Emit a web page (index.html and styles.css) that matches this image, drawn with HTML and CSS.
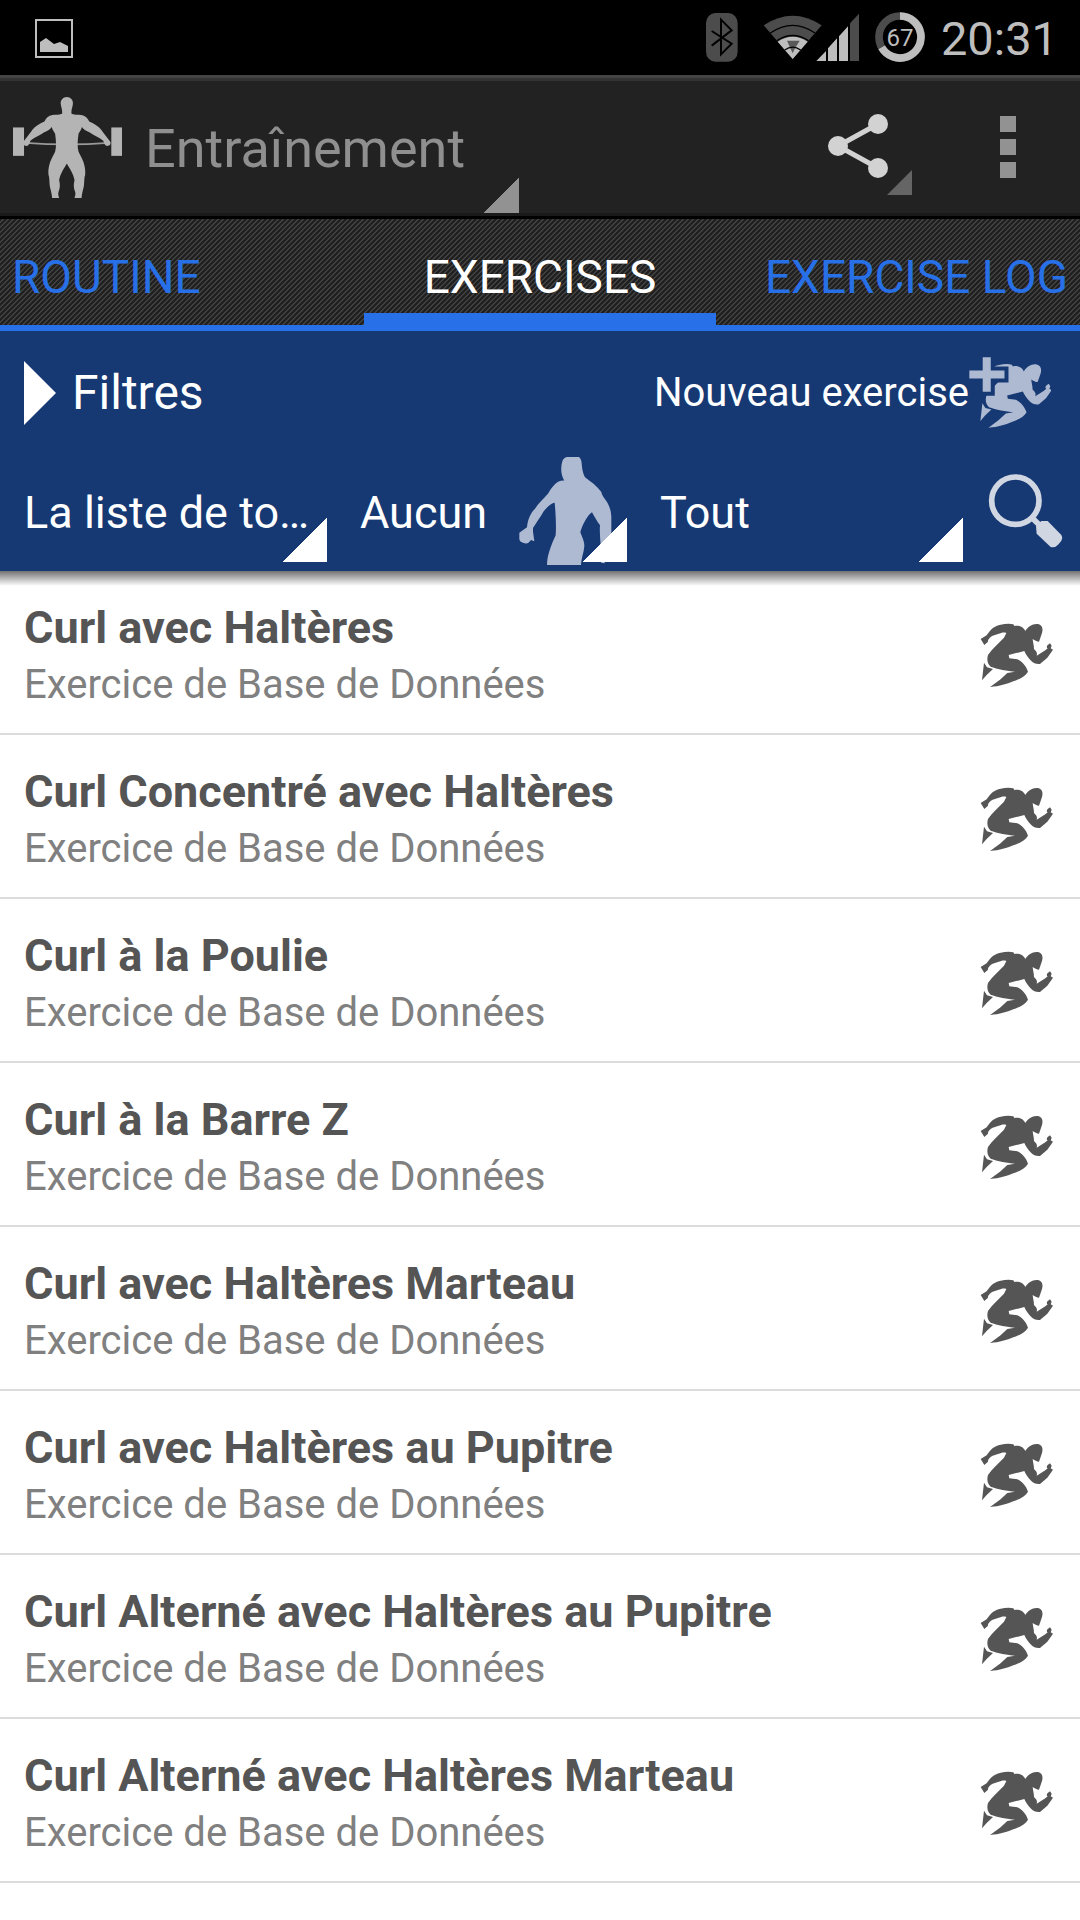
FILE: index.html
```html
<!DOCTYPE html>
<html lang="fr">
<head>
<meta charset="utf-8">
<meta name="viewport" content="width=device-width">
<title>Entraînement</title>
<link rel="stylesheet" href="styles.css">
</head>
<body>
<svg class="defs" aria-hidden="true">
  <symbol id="runner" viewBox="60 68 222 195">
    <g id="runner-shape">
      <path d="M62 116L80 105C92 86 104 76 122 73C135 70 150 69 160 72L163 77C175 74 190 78 196 92C204 78 218 69 234 71C246 74 250 84 246 98L237 124C231 124 224 120 218 116C219 128 222 134 222 146C228 152 233 156 230 166L256 150L263 144C257 140 262 134 270 129L275 136L272 144L279 148L262 172L240 191C228 192 220 188 214 182C204 172 196 160 193 152L146 164L148 174L172 177C184 182 198 196 204 214C196 228 180 236 160 243C140 251 120 258 90 260L120 238L142 218L165 214C145 212 110 206 92 199C82 190 80 176 84 164C96 146 112 132 132 112L139 98C130 95 124 98 114 101L98 106C90 110 82 118 84 124L73 134Z"/>
      <path d="M72 187L81 201L99 206L80 224L66 240Z"/>
    </g>
  </symbol>
</svg>

<div class="statusbar">
  <svg class="picture" width="38" height="39" viewBox="0 0 38 39" role="img" aria-label="Image">
    <rect x="1" y="1" width="36" height="37" fill="none" stroke="#bebebe" stroke-width="2"/>
    <path d="M5 33V23L11 19L19 25L25 23L33 27V33Z" fill="#bebebe"/>
  </svg>
  <svg width="41" height="55" viewBox="45 30 123 165" role="img" aria-label="Bluetooth">
    <rect x="45" y="36" width="95" height="146" rx="28" ry="30" fill="#4c4c4c"/>
    <path d="M62 90L122 128L90 160V56L122 88L62 134" fill="none" stroke="#000" stroke-width="6"/>
  </svg>
  <svg width="96" height="55" viewBox="216 30 288 165" role="img" aria-label="Wi-Fi, mobile">
    <path d="M218 73Q305 16 392 73L305 174Z" fill="#4c4c4c"/>
    <path d="M260 122Q305 92 350 122L305 174Z" fill="#bebebe"/>
    <path d="M288 119H326L312 142L305 157L298 142Z" fill="#5a5a5a"/>
    <path d="M238 96Q305 50 372 96M258 119Q305 88 352 119M281 147Q305 130 329 147" fill="none" stroke="#000" stroke-width="4"/>
    <path d="M376 180L405 150V180ZM411 180V142L438 112V180ZM444 180V106L471 76V180Z" fill="#bebebe"/>
    <path d="M477 180V67L504 38V180Z" fill="#4c4c4c"/>
  </svg>
  <svg width="50" height="55" viewBox="552 30 150 165" role="img" aria-label="67 %">
    <circle cx="627" cy="108" r="63" fill="none" stroke="#4c4c4c" stroke-width="23"/>
    <path d="M627 45A63 63 0 1 1 572 139" fill="none" stroke="#bebebe" stroke-width="23"/>
    <text class="charge" x="627" y="134" text-anchor="middle">67</text>
  </svg>
  <time class="clock">20:31</time>
</div>

<header class="actionbar">
  <svg class="logo" width="109" height="101" viewBox="40 48 326 302" role="img" aria-label="Logo">
    <path d="M78 185Q203 194 326 185" fill="none" stroke="#999" stroke-width="5"/>
    <g fill="#b4b4b4">
      <path id="half" d="M200 48C213 48 221 58 219 70C218 80 214 84 215 98C226 103 234 100 244 102C256 104 264 112 268 121C285 129 301 138 308 152L331 182C334 190 328 196 318 194C314 190 312 186 310 179C300 169 280 162 270 154C258 150 250 144 246 138C244 148 238 153 236 158C233 180 232 196 236 212C246 232 258 250 256 280C252 292 254 300 252 314C250 325 246 335 245 350H224C225 345 228 340 226 332C222 322 220 312 224 296C220 276 208 260 201 247H200Z"/>
      <use href="#half" transform="matrix(-1 0 0 1 402 0)"/>
      <rect x="40" y="139" width="33" height="85"/>
      <rect x="334" y="139" width="32" height="85"/>
    </g>
  </svg>
  <select class="section" aria-label="Section"><option>Entraînement</option></select>
  <button class="share" type="button" aria-label="Partager">
    <svg width="88" height="96" viewBox="0 0 88 96">
      <path d="M52 25L12 47L52 69" fill="none" stroke="#d2d2d2" stroke-width="5"/>
      <g fill="#d2d2d2"><circle cx="12" cy="47" r="10"/><circle cx="52" cy="25" r="10"/><circle cx="52" cy="69" r="10"/></g>
      <path d="M61 96L86 71V96Z" fill="#656565"/>
    </svg>
  </button>
  <button class="overflow" type="button" aria-label="Plus d’options">
    <svg width="16" height="62" viewBox="0 0 16 62" fill="#929292">
      <rect width="16" height="16"/><rect y="23" width="16" height="16"/><rect y="46" width="16" height="16"/>
    </svg>
  </button>
</header>

<nav class="tabs">
  <a href="#routine">ROUTINE</a>
  <a href="#exercises" class="active" aria-current="page">EXERCISES</a>
  <a href="#log">EXERCISE LOG</a>
</nav>

<section class="filters">
  <div class="filters-head">
    <button class="toggle" type="button">
      <svg width="32" height="64" viewBox="0 0 32 64"><path d="M0 0L32 32L0 64Z" fill="#fff"/></svg>
      Filtres
    </button>
    <button class="create" type="button">
      Nouveau exercise
      <svg width="82" height="71" viewBox="56 50 245 212">
        <use href="#runner-shape" x="24" y="1" fill="#aebad2"/>
        <path d="M97 51H121V90H162V114H121V154H97V114H57V90H97Z" fill="#163974" stroke="#163974" stroke-width="24"/>
        <path d="M97 51H121V90H162V114H121V154H97V114H57V90H97Z" fill="#aebad2"/>
      </svg>
    </button>
  </div>
  <div class="filters-row">
    <select class="spinner" aria-label="Liste"><option>La liste de to…</option></select>
    <div class="muscle">
      <svg width="93" height="108" viewBox="56 51 279 324" fill="#aebad2">
        <path d="M186 64C189 56 194 51 202 51H236C244 58 244 68 245 80C246 92 250 104 254 112C270 124 290 138 303 156C306 170 314 176 320 186C328 200 332 212 333 230V280C326 300 326 330 324 350L312 370L302 368C306 340 296 290 299 256C290 244 282 230 275 217C262 226 248 250 240 276C244 290 252 300 252 318C250 340 244 350 242 375H140C140 350 150 320 166 286C168 260 166 220 163 188C150 190 138 204 130 214C120 232 108 248 98 264L98 275L102 304L92 300C86 308 80 314 68 308C60 306 58 302 57 298V278L80 262C82 240 90 220 104 206C114 190 130 176 144 160C156 140 170 120 192 122C182 106 180 84 186 64Z"/>
      </svg>
      <select class="spinner" aria-label="Muscle"><option>Aucun</option></select>
    </div>
    <select class="spinner" aria-label="Type"><option>Tout</option></select>
    <button class="search" type="button" aria-label="Rechercher">
      <svg width="76" height="76" viewBox="24 24 228 228">
        <circle cx="106" cy="107" r="71" fill="none" stroke="#d0d6e2" stroke-width="17"/>
        <path d="M153 155L182 184" stroke="#d0d6e2" stroke-width="17"/>
        <path d="M168 184L184 168H203L244 210Q250 220 242 230L234 239Q224 250 212 246L170 206Z" fill="#d0d6e2"/>
      </svg>
    </button>
  </div>
</section>

<main>
  <ul class="list">
    <li><a href="#1"><span class="name">Curl avec Haltères</span><span class="source">Exercice de Base de Données</span><svg class="kind"><use href="#runner"/></svg></a></li>
    <li><a href="#2"><span class="name">Curl Concentré avec Haltères</span><span class="source">Exercice de Base de Données</span><svg class="kind"><use href="#runner"/></svg></a></li>
    <li><a href="#3"><span class="name">Curl à la Poulie</span><span class="source">Exercice de Base de Données</span><svg class="kind"><use href="#runner"/></svg></a></li>
    <li><a href="#4"><span class="name">Curl à la Barre Z</span><span class="source">Exercice de Base de Données</span><svg class="kind"><use href="#runner"/></svg></a></li>
    <li><a href="#5"><span class="name">Curl avec Haltères Marteau</span><span class="source">Exercice de Base de Données</span><svg class="kind"><use href="#runner"/></svg></a></li>
    <li><a href="#6"><span class="name">Curl avec Haltères au Pupitre</span><span class="source">Exercice de Base de Données</span><svg class="kind"><use href="#runner"/></svg></a></li>
    <li><a href="#7"><span class="name">Curl Alterné avec Haltères au Pupitre</span><span class="source">Exercice de Base de Données</span><svg class="kind"><use href="#runner"/></svg></a></li>
    <li><a href="#8"><span class="name">Curl Alterné avec Haltères Marteau</span><span class="source">Exercice de Base de Données</span><svg class="kind"><use href="#runner"/></svg></a></li>
  </ul>
</main>
</body>
</html>
```
FILE: styles.css
```css
* {
  box-sizing: border-box;
}

body {
  margin: 0;
  min-height: 100vh;
  background: #fff;
  font-family: Roboto, "Noto Sans", sans-serif;
}

button,
select {
  margin: 0;
  padding: 0;
  border: 0;
  border-radius: 0;
  background: none;
  color: inherit;
  font: inherit;
  appearance: none;
}

a {
  color: inherit;
  text-decoration: none;
}

svg {
  display: block;
  flex: none;
}

.defs {
  position: absolute;
  width: 0;
  height: 0;
}

/* System status bar */
.statusbar {
  display: flex;
  align-items: center;
  gap: 16px;
  height: 75px;
  padding: 2px 22px 0 35px;
  background: #000;
  color: #bebebe;
}

.picture {
  margin-right: auto;
}

.charge {
  fill: #bebebe;
  font-size: 72px;
}

.clock {
  font-size: 47px;
}

/* Action bar */
.actionbar {
  display: flex;
  align-items: center;
  height: 144px;
  padding-left: 13px;
  border-top: 3px solid #444;
  border-bottom: 3px solid #000;
  background: #222;
  box-shadow: inset 0 3px #333, inset 0 -3px #1a1a1a;
}

.section {
  width: 397px;
  height: 132px;
  margin-right: auto;
  padding: 2px 0 0 23px;
  background: linear-gradient(to bottom right, transparent 50%, #929292 50%) right bottom / 36px 36px no-repeat;
  color: #8f8f8f;
  font-size: 54px;
}

.share {
  margin-right: 22px;
}

.overflow {
  display: flex;
  justify-content: center;
  width: 144px;
}

/* Tabs */
.tabs {
  display: grid;
  grid-template: 106px / 1fr auto 1fr;
  border-bottom: 6px solid #2770e7;
  background: linear-gradient(135deg, #202020 25%, #404040 25% 50%, #202020 50% 75%, #404040 75%) 0 0 / 5px 5px;
  color: #2770e7;
  font-size: 46px;
  line-height: 116px;
}

.tabs a {
  padding: 0 12px;
}

.tabs a:last-child {
  text-align: right;
}

.tabs .active {
  padding: 0 60px;
  border-bottom: 12px solid #2770e7;
  color: #fff;
}

/* Filter panel */
.filters {
  position: relative;
  background: #163974;
  color: #fff;
}

.filters::after {
  content: "";
  position: absolute;
  top: 100%;
  left: 0;
  right: 0;
  height: 15px;
  background: linear-gradient(rgba(0, 0, 0, 0.55), transparent);
}

.filters-head {
  display: flex;
  align-items: center;
  justify-content: space-between;
  height: 123px;
  padding: 0 29px 0 24px;
}

.toggle {
  display: flex;
  align-items: center;
  gap: 16px;
  font-size: 48px;
}

.create {
  display: flex;
  align-items: center;
  font-size: 40px;
}

.filters-row {
  display: grid;
  grid-template-columns: 327fr 291fr 327fr 108px;
  gap: 9px;
  height: 117px;
}

.spinner {
  min-width: 0;
  width: 100%;
  padding-left: 24px;
  background: linear-gradient(to bottom right, transparent 50%, #fff 50%) right bottom 9px / 44px 45px no-repeat;
  font-size: 45px;
}

.muscle {
  display: grid;
}

.muscle > * {
  grid-area: 1 / 1;
}

.muscle svg {
  align-self: end;
  justify-self: end;
  margin: 0 15px 6px 0;
}

.search {
  display: flex;
  align-items: center;
  padding: 0 0 4px 16px;
}

/* Exercise list */
.list {
  margin: 0;
  padding: 0;
  list-style: none;
}

.list a {
  display: grid;
  grid-template-columns: 1fr auto;
  align-items: center;
  padding: 29px 26px 19px 24px;
  border-bottom: 2px solid #dcdcdc;
}

.name {
  color: #555;
  font-size: 45px;
  font-weight: 700;
  line-height: 56px;
}

.source {
  grid-row: 2;
  color: #808080;
  font-size: 40px;
  line-height: 58px;
}

.kind {
  grid-area: 1 / 2 / 3 / 3;
  width: 74px;
  height: 65px;
  margin-bottom: 4px;
  fill: #555;
}
```
